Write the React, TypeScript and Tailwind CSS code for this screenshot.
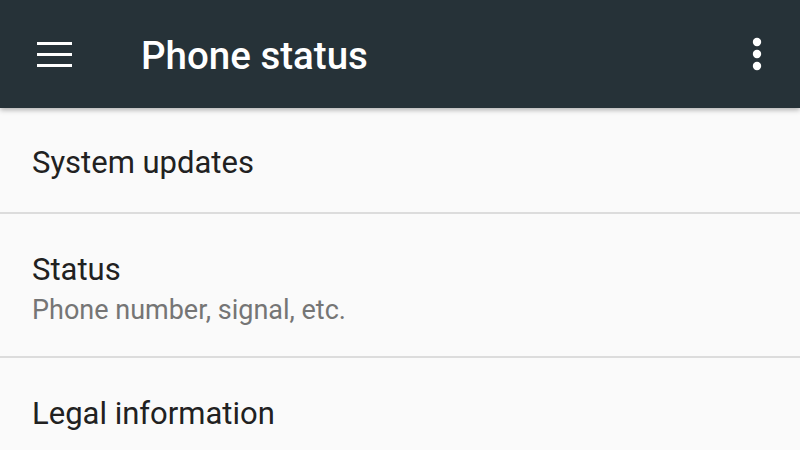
import React from 'react';

const font = { fontFamily: 'Roboto, "Noto Sans", sans-serif' };

const App: React.FC = () => {
  return (
    <div className="w-[800px] h-[450px] overflow-hidden bg-[#fafafa]" style={font}>
      <header className="relative z-10 h-[108px] bg-[#263238] flex items-center shadow-[0_2px_5px_rgba(0,0,0,0.3)]">
        <div className="w-[141px] flex pl-[37px]">
          <svg width="36" height="26" viewBox="0 0 36 26">
            <rect x="0" y="1" width="35" height="3" fill="#fff" />
            <rect x="0" y="12" width="35" height="3" fill="#fff" />
            <rect x="0" y="23" width="35" height="3" fill="#fff" />
          </svg>
        </div>
        <h1 className="flex-1 text-white text-[38.5px] font-medium leading-none pt-[4px]">Phone status</h1>
        <div className="w-[40px] mr-[23px] flex justify-center">
          <svg width="10" height="34" viewBox="0 0 10 34">
            <circle cx="5" cy="5" r="4.2" fill="#fff" />
            <circle cx="5" cy="17" r="4.2" fill="#fff" />
            <circle cx="5" cy="29" r="4.2" fill="#fff" />
          </svg>
        </div>
      </header>
      <ul>
        <li className="h-[106px] flex items-center pl-[32px] border-b-2 border-[#dcdcdc]">
          <span className="text-[31px] text-[#212121] leading-none pt-[4px]">System updates</span>
        </li>
        <li className="h-[144px] flex flex-col justify-center pl-[32px] border-b-2 border-[#dcdcdc]">
          <span className="text-[31px] text-[#212121] leading-none pt-[8px]">Status</span>
          <span className="text-[27px] text-[#757575] leading-none mt-[12px]">Phone number, signal, etc.</span>
        </li>
        <li className="h-[106px] flex items-center pl-[32px]">
          <span className="text-[31px] text-[#212121] leading-none pt-[4px]">Legal information</span>
        </li>
      </ul>
    </div>
  );
};

export default App;
